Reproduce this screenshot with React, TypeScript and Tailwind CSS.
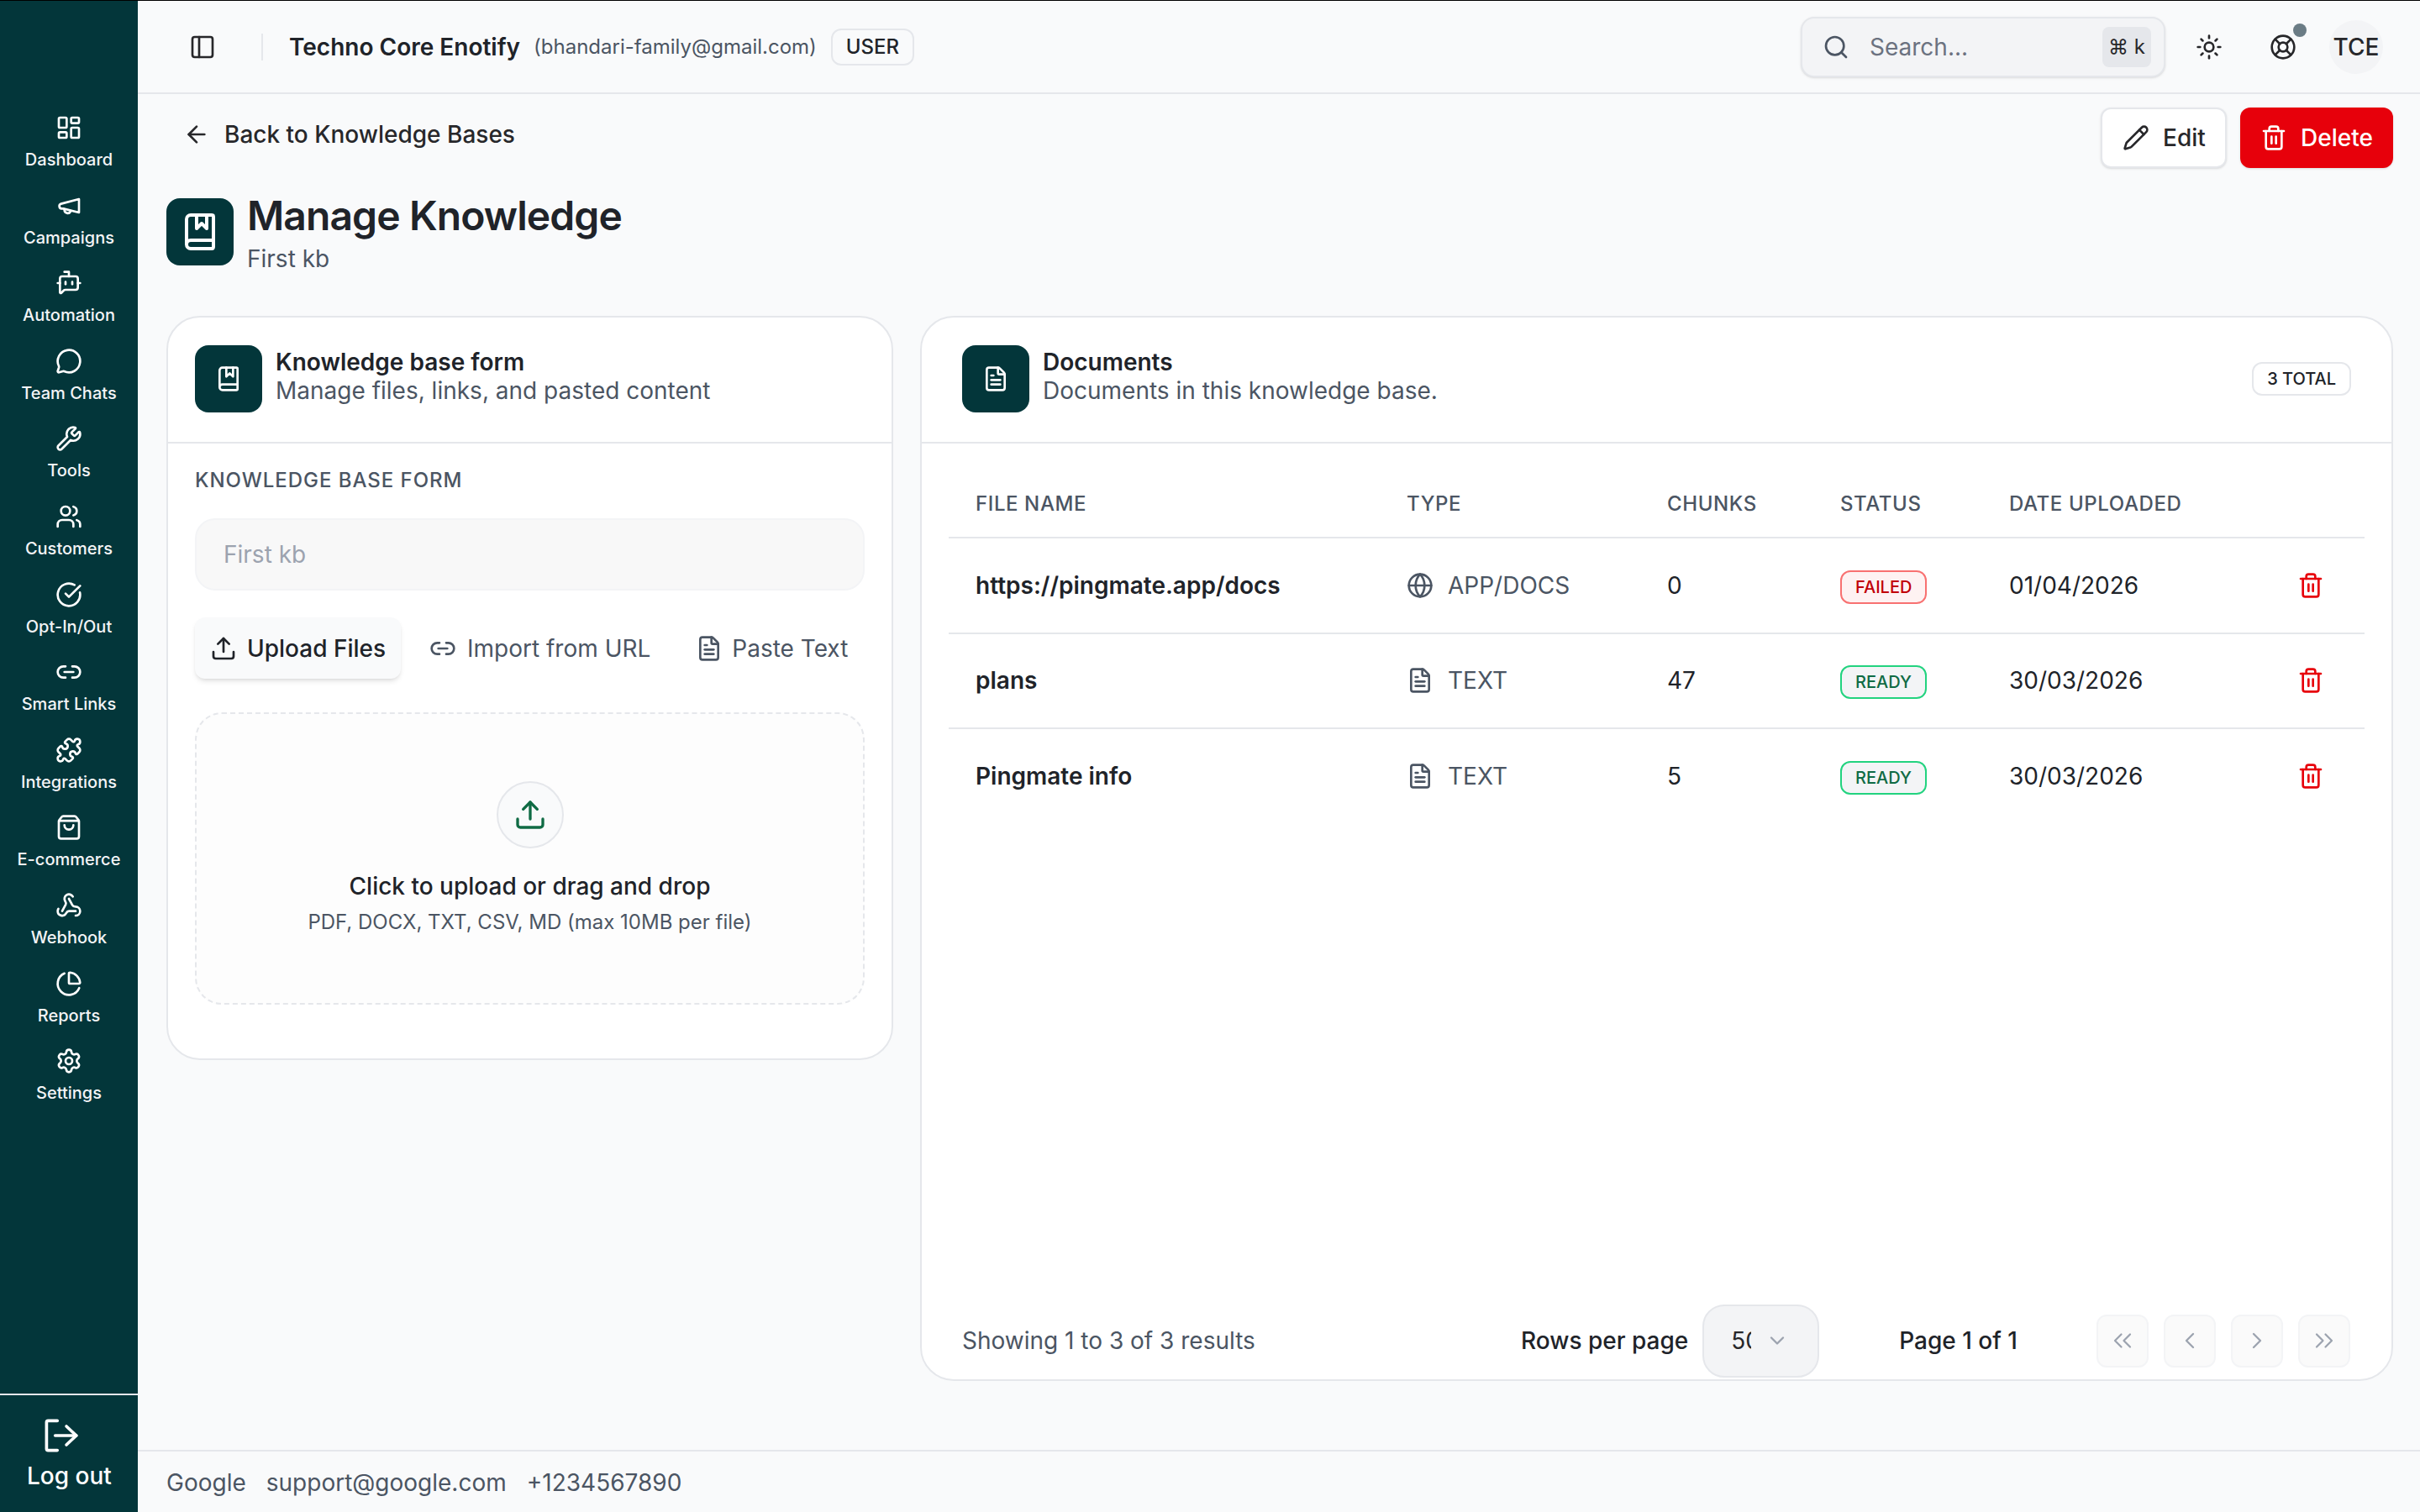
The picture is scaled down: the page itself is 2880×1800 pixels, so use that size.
import {
  ArrowLeft,
  BookMarked,
  BotMessageSquare,
  ChartPie,
  ChevronDown,
  ChevronLeft,
  ChevronRight,
  ChevronsLeft,
  ChevronsRight,
  CircleCheckBig,
  FileText,
  Globe,
  LayoutDashboard,
  LifeBuoy,
  Link2,
  MessageCircle,
  PanelLeft,
  Pencil,
  Puzzle,
  Search,
  Settings,
  ShoppingBag,
  Sun,
  Trash2,
  Upload,
  Users,
  Webhook,
  Wrench,
} from "lucide-react";
import type { ReactNode } from "react";

// flat-ended megaphone, lucide's one has a different silhouette
function Campaign({ size }: { size: number }) {
  return (
    <svg width={size} height={size} viewBox="0 0 24 24" fill="none" stroke="currentColor" strokeWidth={2} strokeLinecap="round" strokeLinejoin="round">
      <path d="M21 6v12L7 14.5H5.5a2.2 2.2 0 0 1-.5-4.3z" />
      <path d="M8 15c-.3 4 4.6 4.8 5.6 1.6" />
    </svg>
  );
}

function LogoutMark() {
  return (
    <svg width={44} height={44} viewBox="0 0 24 24" fill="none" stroke="currentColor" strokeWidth={2} strokeLinecap="round" strokeLinejoin="round">
      <path d="M9.4 2.4H3.4a1 1 0 0 0-1 1v17.2a1 1 0 0 0 1 1h6" />
      <path d="M8 12h13.7" />
      <path d="M15.3 6l6.4 6-6.4 6" />
    </svg>
  );
}

const navItems = [
  { label: "Dashboard", icon: <LayoutDashboard size={32} /> },
  { label: "Campaigns", icon: <Campaign size={32} /> },
  { label: "Automation", icon: <BotMessageSquare size={32} /> },
  { label: "Team Chats", icon: <MessageCircle size={32} /> },
  { label: "Tools", icon: <Wrench size={32} /> },
  { label: "Customers", icon: <Users size={32} /> },
  { label: "Opt-In/Out", icon: <CircleCheckBig size={32} /> },
  { label: "Smart Links", icon: <Link2 size={32} /> },
  { label: "Integrations", icon: <Puzzle size={32} /> },
  { label: "E-commerce", icon: <ShoppingBag size={32} /> },
  { label: "Webhook", icon: <Webhook size={32} /> },
  { label: "Reports", icon: <ChartPie size={32} /> },
  { label: "Settings", icon: <Settings size={32} /> },
];

const documents = [
  { name: "https://pingmate.app/docs", type: "APP/DOCS", chunks: "0", status: "FAILED", date: "01/04/2026" },
  { name: "plans", type: "TEXT", chunks: "47", status: "READY", date: "30/03/2026" },
  { name: "Pingmate info", type: "TEXT", chunks: "5", status: "READY", date: "30/03/2026" },
];

function Sidebar() {
  return (
    <aside className="flex h-full w-[164px] shrink-0 flex-col bg-[#03363a] text-white">
      <nav className="flex flex-1 flex-col pt-[135px]">
        {navItems.map((item) => (
          <a key={item.label} className="flex h-[92.6px] flex-col items-center">
            {item.icon}
            <span className="mt-[9px] text-[20px] leading-[26px] font-medium text-[#f3f4f6]">{item.label}</span>
          </a>
        ))}
      </nav>
      <div className="h-[141px] border-t-2 border-[#e5e7eb] pt-[26px] pl-[32px]">
        <div className="ml-[19px] text-white">
          <LogoutMark />
        </div>
        <div className="mt-[8px] text-[28px] leading-[36px] font-medium">Log out</div>
      </div>
    </aside>
  );
}

function Header() {
  return (
    <header className="flex h-[111px] shrink-0 items-center justify-between border-b-2 border-[#e5e7eb] pr-[44px] pl-[61px]">
      <div className="flex items-center">
        <PanelLeft size={32} className="text-[#27272a]" />
        <div className="mr-[31px] ml-[54px] h-[32px] w-[2px] bg-[#e5e7eb]" />
        <span className="text-[28px] leading-[40px] font-semibold text-[#202329]">Techno Core Enotify</span>
        <span className="ml-[16px] text-[24px] text-[#4b5563]">(bhandari-family@gmail.com)</span>
        <span className="ml-[17px] flex h-[44px] items-center rounded-[12px] border-2 border-[#e5e7eb] px-[16px] text-[24px] font-medium text-[#202329]">USER</span>
      </div>
      <div className="flex items-center">
        <div className="flex h-[72px] w-[434px] items-center rounded-[16px] border-2 border-[#e5e7eb] bg-[#f3f4f6] pr-[15px] pl-[24px] shadow-sm">
          <Search size={32} className="text-[#4b5563]" />
          <span className="ml-[24px] flex-1 text-[28px] text-[#6b7280]">Search...</span>
          <kbd className="flex h-[48px] w-[58px] items-center justify-center rounded-[8px] bg-[#e5e7eb] font-['Inter',sans-serif] text-[24px] text-[#27272a]">⌘ k</kbd>
        </div>
        <Sun size={32} className="ml-[36px] text-[#27272a]" />
        <div className="relative ml-[56px]">
          <LifeBuoy size={32} className="text-[#27272a]" />
          <span className="absolute -top-[12px] -right-[12px] h-[16px] w-[16px] rounded-full bg-[#6b7c85]" />
        </div>
        <div className="ml-[39px] flex h-[64px] w-[64px] items-center justify-center rounded-full bg-[#f3f4f6] text-[28px] font-medium text-[#27272a]">TCE</div>
      </div>
    </header>
  );
}

function CardHeading({ icon, title, sub }: { icon: ReactNode; title: string; sub: string }) {
  return (
    <div className="flex items-center gap-[16px]">
      <div className="flex h-[80px] w-[80px] items-center justify-center rounded-[16px] bg-[#03363a] text-white">{icon}</div>
      <div className="mb-[6px]">
        <div className="text-[28px] leading-[34px] font-semibold text-[#202329]">{title}</div>
        <div className="text-[28px] leading-[34px] text-[#4b5563]">{sub}</div>
      </div>
    </div>
  );
}

function KnowledgeForm() {
  return (
    <section className="h-[886px] w-[865px] shrink-0 rounded-[40px] border-2 border-[#e5e7eb] bg-white">
      <div className="flex h-[150px] items-center border-b-2 border-[#e5e7eb] px-[32px] pb-[2px]">
        <CardHeading icon={<BookMarked size={32} />} title="Knowledge base form" sub="Manage files, links, and pasted content" />
      </div>
      <div className="px-[32px] pt-[28px]">
        <div className="text-[24px] leading-[32px] font-medium tracking-[0.04em] text-[#4b5563]">KNOWLEDGE BASE FORM</div>
        <div className="mt-[29px] flex h-[86px] items-center rounded-[24px] border-2 border-[#f3f4f6] bg-[#f8f8f8] px-[32px] text-[28px] text-[#9ca3af]">First kb</div>
        <div className="mt-[32px] flex items-center text-[28px] whitespace-nowrap">
          <div className="flex h-[73px] w-[245px] items-center gap-[12px] rounded-[12px] bg-[#f9fafb] pl-[18px] font-medium text-[#202329] shadow-md">
            <Upload size={32} />
            Upload Files
          </div>
          <div className="ml-[34px] flex items-center gap-[13px] text-[#4b5563]">
            <Link2 size={32} />
            Import from URL
          </div>
          <div className="ml-[54px] flex items-center gap-[11px] text-[#4b5563]">
            <FileText size={32} />
            Paste Text
          </div>
        </div>
        <div className="mt-[40px] flex h-[348px] flex-col items-center rounded-[32px] border-2 border-dashed border-[#e5e7eb] bg-[#fdfdfd] pt-[80px]">
          <div className="flex h-[80px] w-[80px] items-center justify-center rounded-full border-2 border-[#e5e7eb] bg-[#f9fafb] text-[#0f6b44]">
            <Upload size={40} />
          </div>
          <div className="mt-[25px] text-[28px] leading-[40px] font-medium text-[#202329]">Click to upload or drag and drop</div>
          <div className="mt-[6px] text-[24px] leading-[34px] text-[#4b5563]">PDF, DOCX, TXT, CSV, MD (max 10MB per file)</div>
        </div>
      </div>
    </section>
  );
}

function StatusBadge({ status }: { status: string }) {
  const failed = status === "FAILED";
  return (
    <span
      className={
        failed
          ? "inline-flex h-[40px] items-center rounded-[12px] border-2 border-[#f87171] bg-[#fef2f2] px-[16px] text-[20px] font-medium text-[#c10007]"
          : "inline-flex h-[40px] items-center rounded-[12px] border-2 border-[#22d37f] bg-[#f3f4f6] px-[16px] text-[20px] font-medium text-[#0f6b44]"
      }
    >
      {status}
    </span>
  );
}

function DocumentsTable() {
  return (
    <table className="w-full table-fixed border-collapse text-[28px] text-[#202329]">
      <thead>
        <tr className="h-[80px] border-b-2 border-[#e5e7eb] text-left text-[24px] font-medium tracking-wide text-[#4b5563]">
          <th className="w-[513px] pl-[32px] font-medium">FILE NAME</th>
          <th className="w-[310px] pl-[32px] font-medium">TYPE</th>
          <th className="w-[206px] pl-[32px] font-medium">CHUNKS</th>
          <th className="w-[201px] pl-[32px] font-medium">STATUS</th>
          <th className="w-[359px] pl-[32px] font-medium">DATE UPLOADED</th>
          <th />
        </tr>
      </thead>
      <tbody>
        {documents.map((doc, i) => (
          <tr key={doc.name} className={i < documents.length - 1 ? "h-[113.5px] border-b-2 border-[#e5e7eb]" : "h-[113.5px]"}>
            <td className="pl-[32px] font-semibold">{doc.name}</td>
            <td className="pl-[32px] text-[#4b5563]">
              <span className="flex items-center gap-[17px]">
                {doc.type === "TEXT" ? <FileText size={32} /> : <Globe size={32} />}
                {doc.type}
              </span>
            </td>
            <td className="pl-[32px]">{doc.chunks}</td>
            <td className="pl-[32px]">
              <StatusBadge status={doc.status} />
            </td>
            <td className="pl-[32px]">{doc.date}</td>
            <td className="pl-[16px] text-[#e7000b]">
              <Trash2 size={32} />
            </td>
          </tr>
        ))}
      </tbody>
    </table>
  );
}

function PageButton({ children }: { children: ReactNode }) {
  return <button className="flex h-[63px] w-[62px] items-center justify-center rounded-[12px] border-2 border-[#f3f4f6] bg-[#fafafa] text-[#9ca3af]">{children}</button>;
}

function Documents() {
  return (
    <section className="flex h-[1268px] min-w-0 flex-1 flex-col rounded-[40px] border-2 border-[#e5e7eb] bg-white">
      <div className="flex h-[150px] shrink-0 items-center justify-between border-b-2 border-[#e5e7eb] px-[48px] pb-[2px]">
        <CardHeading icon={<FileText size={32} />} title="Documents" sub="Documents in this knowledge base." />
        <span className="flex h-[40px] items-center rounded-[12px] border-2 border-[#e5e7eb] px-[16px] text-[20px] font-medium text-[#202329]">3 TOTAL</span>
      </div>
      <div className="flex-1 px-[32px] pt-[32px]">
        <DocumentsTable />
      </div>
      <div className="flex h-[92px] shrink-0 items-center pr-[49px] pl-[48px] text-[28px]">
        <span className="text-[#4b5563]">Showing 1 to 3 of 3 results</span>
        <span className="ml-auto font-medium text-[#202329]">Rows per page</span>
        <div className="ml-[17px] flex h-[87px] w-[139px] items-center rounded-[26px] border-2 border-[#e5e7eb] bg-[#f3f4f6] pl-[32px]">
          <span className="w-[24px] overflow-hidden text-[#27272a]">50</span>
          <ChevronDown size={28} className="ml-[17px] text-[#9ca3af]" />
        </div>
        <span className="ml-[95px] font-medium text-[#202329]">Page 1 of 1</span>
        <div className="ml-[94px] flex gap-[18px]">
          <PageButton><ChevronsLeft size={36} strokeWidth={1.5} /></PageButton>
          <PageButton><ChevronLeft size={32} strokeWidth={1.75} /></PageButton>
          <PageButton><ChevronRight size={32} strokeWidth={1.75} /></PageButton>
          <PageButton><ChevronsRight size={36} strokeWidth={1.5} /></PageButton>
        </div>
      </div>
    </section>
  );
}

export default function App() {
  return (
    <div className="flex h-[1800px] w-[2880px] overflow-hidden border-t border-black bg-[#f9fafb] font-['Inter',sans-serif]">
      <Sidebar />
      <main className="flex h-full min-w-0 flex-1 flex-col">
        <Header />
        <div className="flex-1 pt-[16px] pr-[32px] pl-[34px]">
          <div className="flex items-start justify-between">
            <a className="mt-[11px] flex items-center gap-[17px] pl-[20px] text-[28px] font-medium text-[#27272a]">
              <ArrowLeft size={32} />
              Back to Knowledge Bases
            </a>
            <div className="flex gap-[16px]">
              <button className="flex h-[72px] w-[150px] items-center gap-[16px] rounded-[12px] border-2 border-[#e5e7eb] bg-white pl-[24px] text-[28px] font-medium text-[#27272a] shadow-sm">
                <Pencil size={32} />
                Edit
              </button>
              <button className="flex h-[72px] w-[182px] items-center gap-[16px] rounded-[12px] bg-[#e7000b] pl-[24px] text-[28px] font-medium text-white shadow-sm">
                <Trash2 size={32} />
                Delete
              </button>
            </div>
          </div>
          <div className="mt-[29px] flex items-center gap-[16px]">
            <div className="flex h-[80px] w-[80px] items-center justify-center rounded-[16px] bg-[#03363a] text-white">
              <BookMarked size={48} />
            </div>
            <div>
              <h1 className="text-[48px] leading-[56px] font-semibold tracking-[-0.019em] text-[#202329]">Manage Knowledge</h1>
              <p className="mt-[8px] text-[28px] leading-[30px] text-[#4b5563]">First kb</p>
            </div>
          </div>
          <div className="mt-[53px] flex items-start gap-[32px]">
            <KnowledgeForm />
            <Documents />
          </div>
        </div>
        <footer className="flex h-[74px] shrink-0 items-center gap-[24px] border-t-2 border-[#e5e7eb] pt-[2px] pl-[34px] text-[28px] text-[#4b5563]">
          <span>Google</span>
          <span>support@google.com</span>
          <span>+1234567890</span>
        </footer>
      </main>
    </div>
  );
}
